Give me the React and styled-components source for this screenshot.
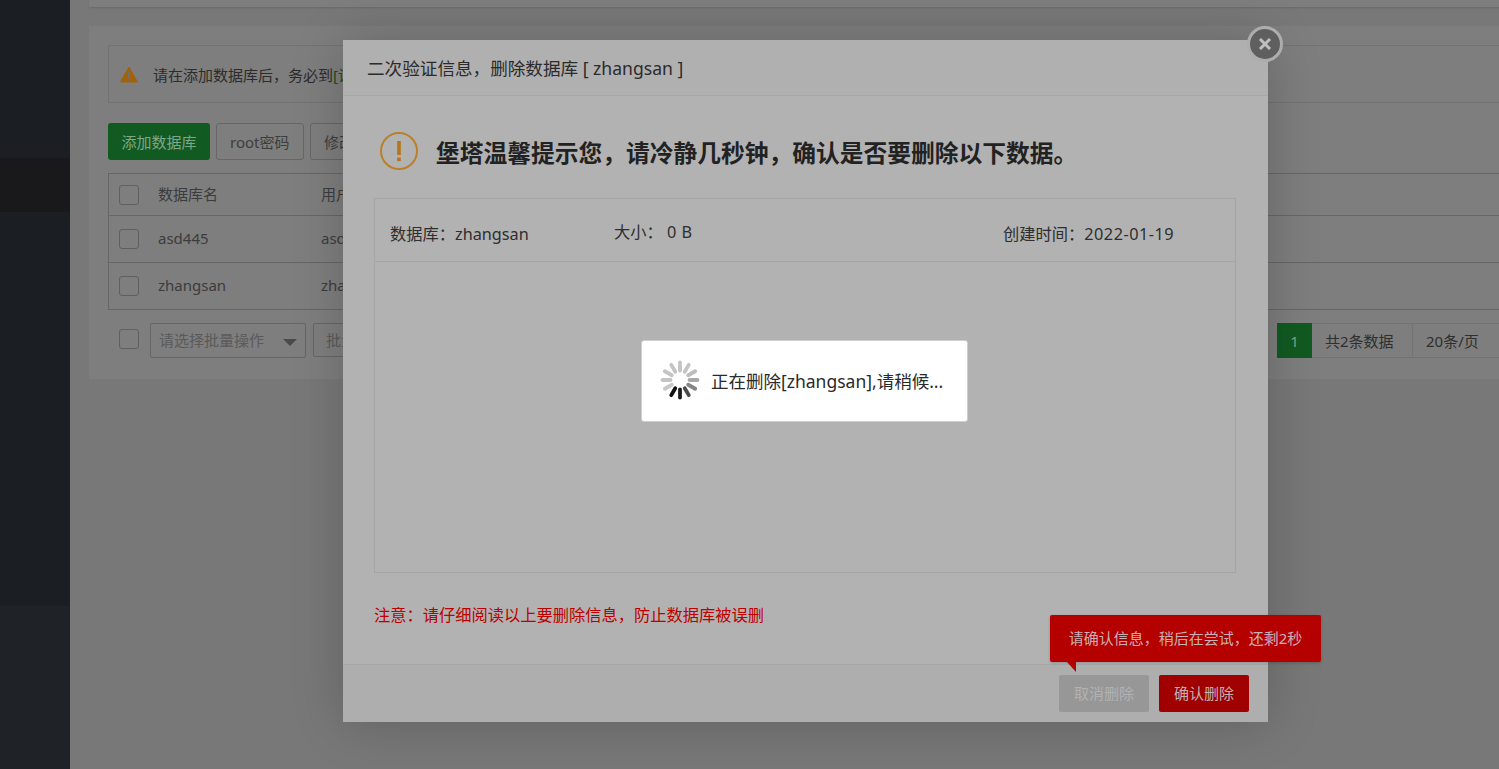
import React from 'react';
import styled, { createGlobalStyle } from 'styled-components';

const rows = ['asd445', 'zhangsan'];
const spokes = [
  { a: 0, c: '#c4c4c4' }, { a: 30, c: '#c4c4c4' }, { a: 60, c: '#bdbdbd' }, { a: 90, c: '#a8a8a8' },
  { a: 120, c: '#858585' }, { a: 150, c: '#4a4a4a' }, { a: 180, c: '#1c1c1c' }, { a: 210, c: '#111111' },
  { a: 240, c: '#c8c8c8' }, { a: 270, c: '#c4c4c4' }, { a: 300, c: '#c4c4c4' }, { a: 330, c: '#c4c4c4' },
];

export default function App() {
  return (
    <>
      <GlobalStyle />
      <Page>
        <Sidebar>
          <SideBlock h={158} />
          <SideBlock h={54} tone="active" />
          <SideBlock h={394} />
          <SideBlock tone="bottom" />
        </Sidebar>
        <Main>
          <TopPanel />
          <Panel>
            <Notice>
              <svg width="18" height="17" viewBox="0 0 18 17">
                <path d="M9 1 L17.5 16 H.5 Z" fill="#a2620a" stroke="#a2620a" strokeLinejoin="round" />
                <rect x="8" y="5.5" width="2" height="6" fill="#6e6e6e" />
                <rect x="8" y="12.5" width="2" height="2" fill="#6e6e6e" />
              </svg>
              <span>请在添加数据库后，务必到<Hint>[设</Hint></span>
            </Notice>
            <Toolbar>
              <GreenButton>添加数据库</GreenButton>
              <GhostButton>root密码</GhostButton>
              <GhostButton>修改密码权限</GhostButton>
            </Toolbar>
            <Table>
              <TableRow head>
                <Check />
                <Cell>数据库名</Cell>
                <Cell>用户名</Cell>
              </TableRow>
              {rows.map((name) => (
                <TableRow key={name}>
                  <Check />
                  <Cell>{name}</Cell>
                  <Cell>{name}</Cell>
                </TableRow>
              ))}
            </Table>
            <Footer>
              <FooterCheck />
              <Select>
                请选择批量操作
                <Caret />
              </Select>
              <BatchButton>批量操作</BatchButton>
              <Pager>
                <PageCurrent>1</PageCurrent>
                <PageInfo w={101}>共2条数据</PageInfo>
                <PageInfo w={113}>20条/页</PageInfo>
              </Pager>
            </Footer>
          </Panel>
        </Main>
      </Page>

      <Modal>
        <CloseButton>
          <svg width="14" height="14" viewBox="0 0 14 14">
            <path d="M2 2 L12 12 M12 2 L2 12" stroke="#c0c0c0" strokeWidth="3" />
          </svg>
        </CloseButton>
        <ModalTitle>二次验证信息，删除数据库 [ zhangsan ]</ModalTitle>
        <ModalBody>
          <Heading>
            <svg width="38" height="38" viewBox="0 0 38 38">
              <circle cx="19" cy="19" r="18" fill="none" stroke="#b98029" strokeWidth="2" />
              <rect x="17.2" y="9" width="3.6" height="14" fill="#b5751a" />
              <rect x="17.2" y="25.5" width="3.6" height="3.6" fill="#b5751a" />
            </svg>
            <span>堡塔温馨提示您，请冷静几秒钟，确认是否要删除以下数据。</span>
          </Heading>
          <InfoBox>
            <InfoRow>
              <InfoItem>数据库：zhangsan</InfoItem>
              <InfoItem raised>大小：&nbsp;<Num>0 B</Num></InfoItem>
              <InfoItem>创建时间：<Num>2022-01-19</Num></InfoItem>
            </InfoRow>
          </InfoBox>
          <Warning>注意：请仔细阅读以上要删除信息，防止数据库被误删</Warning>
        </ModalBody>
        <ModalFooter>
          <CancelButton>取消删除</CancelButton>
          <ConfirmButton>确认删除</ConfirmButton>
        </ModalFooter>
      </Modal>

      <Tooltip>请确认信息，稍后在尝试，还剩2秒</Tooltip>

      <Loading>
        <svg width="40" height="40" viewBox="0 0 40 40">
          {spokes.map((s) => (
            <line
              key={s.a}
              x1="20"
              y1="2.5"
              x2="20"
              y2="10.5"
              stroke={s.c}
              strokeWidth="3.8"
              strokeLinecap="round"
              transform={`rotate(${s.a} 20 20)`}
            />
          ))}
        </svg>
        <span>正在删除[zhangsan],请稍候...</span>
      </Loading>
    </>
  );
}

const GlobalStyle = createGlobalStyle`
  html, body {
    margin: 0;
    height: 100%;
    overflow: hidden;
    background: #787878;
    font-family: "Noto Sans", "Noto Sans CJK SC", sans-serif;
  }
  * { box-sizing: border-box; }
`;

const Page = styled.div`
  display: flex;
  height: 769px;
  overflow: hidden;
`;

const Sidebar = styled.aside`
  flex: none;
  width: 70px;
  display: flex;
  flex-direction: column;
`;

const SideBlock = styled.div`
  height: ${(p) => (p.h ? `${p.h}px` : 'auto')};
  flex: ${(p) => (p.h ? 'none' : 1)};
  background: ${(p) => (p.tone === 'active' ? '#19191c' : p.tone === 'bottom' ? '#1f2328' : '#1b1e23')};
`;

const Main = styled.main`
  flex: none;
  padding-left: 19px;
  width: 1475px;
`;

const TopPanel = styled.div`
  height: 7px;
  background: #7e7e7e;
  box-shadow: 0 1px 2px rgba(0, 0, 0, 0.12);
`;

const Panel = styled.section`
  margin-top: 19px;
  height: 353px;
  padding: 19px;
  background: #7e7e7e;
`;

const Notice = styled.div`
  display: flex;
  align-items: center;
  gap: 15px;
  height: 58px;
  padding-left: 11px;
  border: 1px solid #727272;
  font-size: 15px;
  color: #2c2c2c;
  white-space: nowrap;
`;

const Hint = styled.span`
  color: #134f20;
`;

const Toolbar = styled.div`
  display: flex;
  gap: 6px;
  margin: 20px 0 13px;
`;

const GreenButton = styled.div`
  width: 102px;
  height: 37px;
  display: flex;
  align-items: center;
  justify-content: center;
  border-radius: 3px;
  background: #115a21;
  color: #7fa689;
  font-size: 15px;
`;

const GhostButton = styled.div`
  min-width: 88px;
  height: 37px;
  padding: 0 13px;
  display: flex;
  align-items: center;
  border: 1px solid #666;
  border-radius: 3px;
  color: #3d3d3d;
  font-size: 15px;
`;

const Table = styled.div`
  border: 1px solid #666;
  border-bottom: 0;
`;

const TableRow = styled.div`
  display: grid;
  grid-template-columns: 39px 163px 1fr;
  align-items: center;
  height: ${(p) => (p.head ? '42px' : '47px')};
  padding-left: 10px;
  border-bottom: 1px solid #666;
  font-size: 15px;
  color: #3c3c3c;
`;

const Check = styled.div`
  width: 20px;
  height: 20px;
  border: 1px solid #5f5f5f;
  border-radius: 3px;
`;

const Cell = styled.div`
  padding-bottom: 2px;
  white-space: nowrap;
`;

const Footer = styled.div`
  display: flex;
  align-items: flex-start;
  margin-top: 13px;
  padding-left: 11px;
`;

const FooterCheck = styled(Check)`
  margin: 6px 11px 0 0;
`;

const Select = styled.div`
  position: relative;
  width: 156px;
  height: 35px;
  padding: 0 0 2px 8px;
  display: flex;
  align-items: center;
  border: 1px solid #666;
  border-radius: 2px;
  color: #5a5a5a;
  font-size: 15px;
`;

const Caret = styled.i`
  position: absolute;
  right: 8px;
  top: 15px;
  border: 7px solid transparent;
  border-top-color: #4a4a4a;
  border-bottom: 0;
`;

const BatchButton = styled.div`
  margin-left: 7px;
  width: 90px;
  height: 34px;
  padding: 0 0 2px 12px;
  display: flex;
  align-items: center;
  border: 1px solid #666;
  border-radius: 2px;
  color: #5a5a5a;
  font-size: 15px;
`;

const Pager = styled.div`
  display: flex;
  margin-left: auto;
  height: 35px;
  font-size: 15px;
  color: #2f2f2f;
`;

const PageCurrent = styled.div`
  width: 35px;
  display: flex;
  align-items: center;
  justify-content: center;
  background: #115a21;
  color: #7fa689;
`;

const PageInfo = styled.div`
  width: ${(p) => p.w}px;
  padding-left: 13px;
  display: flex;
  align-items: center;
  border: 1px solid #737373;
  border-left: 0;
  white-space: nowrap;
`;

const Modal = styled.div`
  position: absolute;
  left: 343px;
  top: 40px;
  width: 925px;
  height: 682px;
  display: flex;
  flex-direction: column;
  background: #b2b2b2;
  box-shadow: 1px 1px 50px rgba(0, 0, 0, 0.2);
`;

const CloseButton = styled.div`
  position: absolute;
  right: -15px;
  top: -14px;
  width: 36px;
  height: 36px;
  display: flex;
  align-items: center;
  justify-content: center;
  border: 3px solid #adadad;
  border-radius: 50%;
  background: #5f5f5f;
`;

const ModalTitle = styled.div`
  flex: none;
  height: 56px;
  padding-left: 24px;
  display: flex;
  align-items: center;
  border-bottom: 1px solid #a7a7a7;
  background: #b0b0b0;
  color: #2b2b2b;
  font-size: 17.6px;
`;

const ModalBody = styled.div`
  flex: 1;
  padding: 36px 32px 0 31px;
`;

const Heading = styled.div`
  display: flex;
  align-items: center;
  gap: 18px;
  padding-left: 6px;
  height: 38px;
  color: #222;
  font-size: 23.75px;
  font-weight: 700;
  white-space: nowrap;
`;

const InfoBox = styled.div`
  margin-top: 28px;
  height: 375px;
  border: 1px solid #a5a5a5;
`;

const InfoRow = styled.div`
  display: grid;
  grid-template-columns: 224px 389px 1fr;
  align-items: center;
  height: 63px;
  padding-left: 15px;
  border-bottom: 1px solid #a5a5a5;
`;

const InfoItem = styled.div`
  padding-top: ${(p) => (p.raised ? '2px' : '6px')};
  color: #2e2e2e;
  font-size: 16.25px;
  white-space: nowrap;
`;

const Num = styled.span`
  letter-spacing: 0.5px;
`;

const Warning = styled.div`
  margin-top: 30px;
  line-height: 24px;
  color: #bd0000;
  font-size: 16.25px;
`;

const ModalFooter = styled.div`
  flex: none;
  height: 58px;
  padding: 10px 19px 0 0;
  display: flex;
  justify-content: flex-end;
  gap: 10px;
  border-top: 1px solid #a7a7a7;
  background: #aeaeae;
`;

const FooterButton = styled.div`
  width: 90px;
  height: 37px;
  padding-bottom: 3px;
  display: flex;
  align-items: center;
  justify-content: center;
  border-radius: 2px;
  font-size: 15px;
`;

const CancelButton = styled(FooterButton)`
  background: #979797;
  color: #b2b2b2;
`;

const ConfirmButton = styled(FooterButton)`
  background: #a00000;
  color: #c2b2b2;
`;

const Tooltip = styled.div`
  position: absolute;
  left: 1050px;
  top: 615px;
  width: 271px;
  height: 47px;
  padding-bottom: 2px;
  display: flex;
  align-items: center;
  justify-content: center;
  border-radius: 2px;
  background: #b50000;
  color: #c9b0b6;
  font-size: 15px;
  box-shadow: 0 1px 3px rgba(0, 0, 0, 0.2);

  &::after {
    content: '';
    position: absolute;
    left: 17px;
    top: 47px;
    border-top: 10px solid #b50000;
    border-left: 9px solid transparent;
  }
`;

const Loading = styled.div`
  position: absolute;
  left: 641px;
  top: 340px;
  width: 327px;
  height: 82px;
  padding: 0 0 2px 18px;
  display: flex;
  align-items: center;
  gap: 11px;
  border-radius: 3px;
  border: 1px solid #cfcfcf;
  background: #fff;
  color: #2a2a2a;
  font-size: 17.5px;
  white-space: nowrap;
`;
